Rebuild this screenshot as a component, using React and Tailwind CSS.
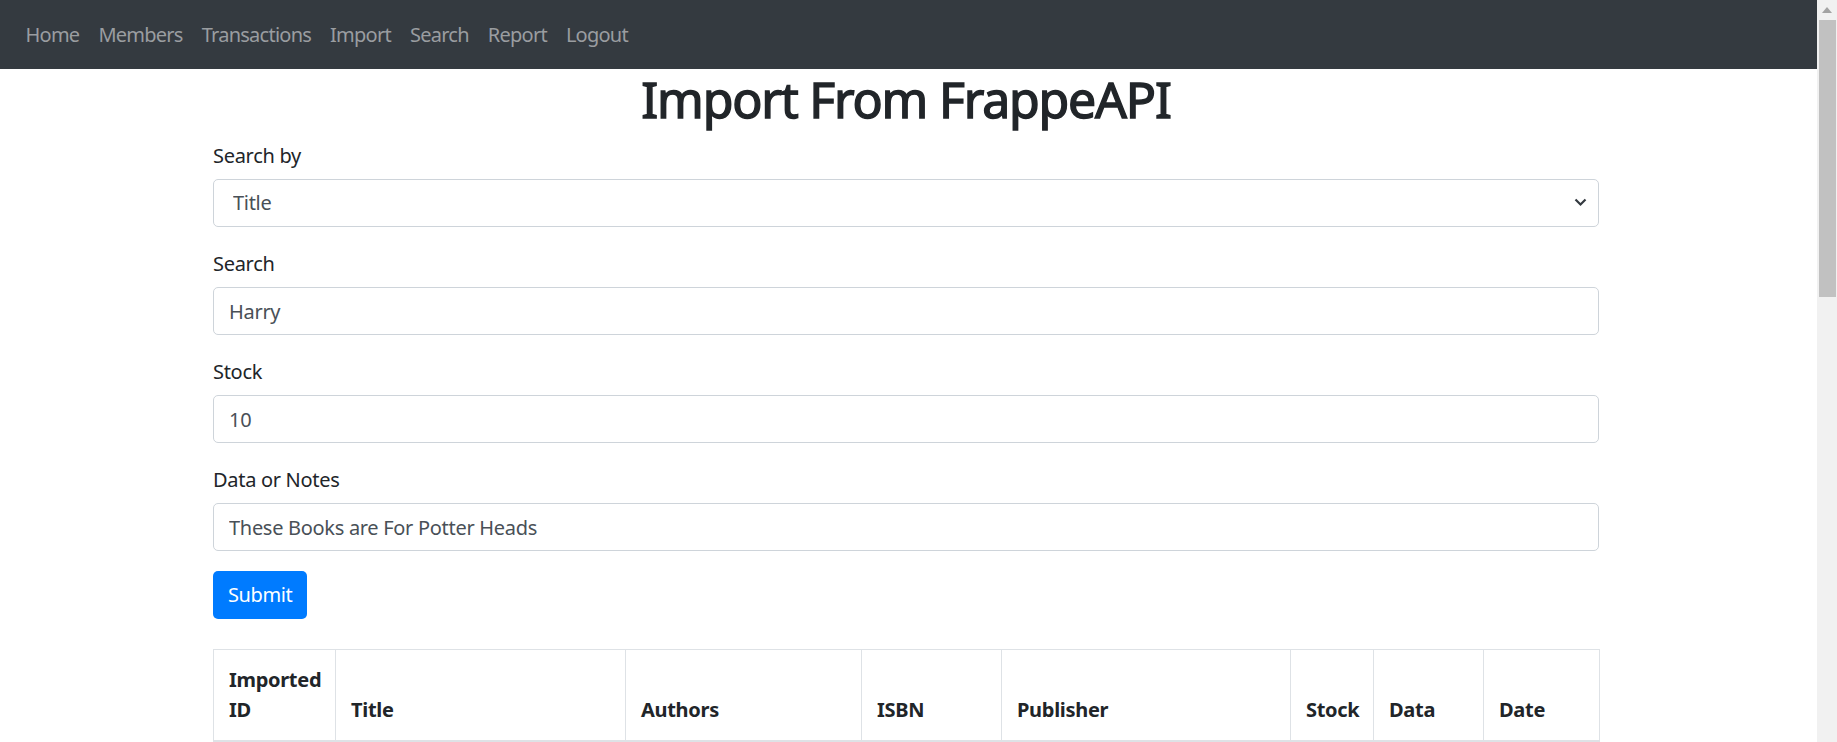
import React, { useState } from "react";

const navLinks = ["Home", "Members", "Transactions", "Import", "Search", "Report", "Logout"];

const columns = [
  { label: "Imported ID", width: "w-[122px]" },
  { label: "Title", width: "w-[290px]" },
  { label: "Authors", width: "w-[236px]" },
  { label: "ISBN", width: "w-[140px]" },
  { label: "Publisher", width: "w-[289px]" },
  { label: "Stock", width: "w-[83px]" },
  { label: "Data", width: "w-[110px]" },
  { label: "Date", width: "w-[116px]" },
];

const rows = [
  ["1", "Harry Potter and the Half-Blood Prince", "J.K. Rowling/Mary GrandPré", "439785960", "Scholastic Inc.", "10", "These Books are For Potter Heads", "2023-05-14"],
  ["2", "Harry Potter and the Order of the Phoenix", "J.K. Rowling/Mary GrandPré", "439358078", "Scholastic Inc.", "10", "These Books are For Potter Heads", "2023-05-14"],
];

const Field = ({ label, children }) => (
  <div className="mb-[20px]">
    <label className="block pt-[2px] mb-[8px] text-[20px] leading-[30px] text-[#212529] tracking-[-0.3px]">{label}</label>
    {children}
  </div>
);

const inputClass =
  "block w-full h-[48px] px-[15px] text-[20px] leading-[30px] text-[#495057] bg-white border border-[#ced4da] rounded-[5px] outline-none tracking-[-0.3px]";

const App = () => {
  const [searchBy, setSearchBy] = useState("Title");
  const [search, setSearch] = useState("Harry");
  const [stock, setStock] = useState("10");
  const [notes, setNotes] = useState("These Books are For Potter Heads");

  return (
    <div className="flex h-[742px] overflow-hidden bg-white font-['Noto_Sans',sans-serif]">
      <div className="w-[1817px] shrink-0">
        {/* Navbar */}
        <nav className="flex items-center h-[69px] bg-[#343a40] px-[16px]">
          {navLinks.map((link) => (
            <a
              key={link}
              href="#"
              className="px-[9.5px] text-[20px] leading-[30px] text-[#9a9da0] tracking-[-0.75px]"
            >
              {link}
            </a>
          ))}
        </nav>

        <div className="ml-[213px] w-[1386px]">
          <h1 className="text-center text-[50px] leading-[60px] font-normal text-[#212529] mb-[10px] tracking-[-1.2px] [-webkit-text-stroke:1.4px_#212529]">
            Import From FrappeAPI
          </h1>

          <Field label="Search by">
            <div className="relative">
              <select
                value={searchBy}
                onChange={(e) => setSearchBy(e.target.value)}
                className={`${inputClass} appearance-none pl-[19px]`}
              >
                <option>Title</option>
                <option>Author</option>
                <option>ISBN</option>
                <option>Publisher</option>
              </select>
              <svg
                className="absolute right-[12px] top-[19px] pointer-events-none"
                width="13"
                height="9"
                viewBox="0 0 13 9"
              >
                <path d="M1.5 1.5 L6.5 6.5 L11.5 1.5" fill="none" stroke="#343a40" strokeWidth="2.2" />
              </svg>
            </div>
          </Field>

          <Field label="Search">
            <input className={inputClass} value={search} onChange={(e) => setSearch(e.target.value)} />
          </Field>

          <Field label="Stock">
            <input className={inputClass} value={stock} onChange={(e) => setStock(e.target.value)} />
          </Field>

          <Field label="Data or Notes">
            <input className={inputClass} value={notes} onChange={(e) => setNotes(e.target.value)} />
          </Field>

          <button className="h-[48px] px-[15px] text-[20px] leading-[30px] text-white bg-[#007bff] rounded-[5px] tracking-[-0.4px]">
            Submit
          </button>

          {/* Imported books table */}
          <table className="mt-[30px] w-full table-fixed border-collapse text-[20px] leading-[30px] text-[#212529]">
            <thead>
              <tr>
                {columns.map((col) => (
                  <th
                    key={col.label}
                    className={`${col.width} p-[15px] align-bottom text-left font-bold border border-[#dee2e6] border-b-2 tracking-[-0.3px]`}
                  >
                    {col.label}
                  </th>
                ))}
              </tr>
            </thead>
            <tbody>
              {rows.map((row, i) => (
                <tr key={i} className={i % 2 === 0 ? "bg-[#f2f2f2]" : ""}>
                  {row.map((cell, j) => (
                    <td key={j} className="p-[15px] align-top border border-[#dee2e6] break-words">
                      {cell}
                    </td>
                  ))}
                </tr>
              ))}
            </tbody>
          </table>
        </div>
      </div>

      {/* Browser scrollbar */}
      <div className="w-[20px] shrink-0 bg-[#f1f1f1] flex flex-col items-center">
        <svg className="mt-[7px]" width="10" height="6" viewBox="0 0 10 6">
          <path d="M0 6 L5 0 L10 6 Z" fill="#a3a3a3" />
        </svg>
        <div className="mt-[7px] w-[17px] h-[277px] bg-[#c1c1c1]" />
      </div>
    </div>
  );
};

export default App;
